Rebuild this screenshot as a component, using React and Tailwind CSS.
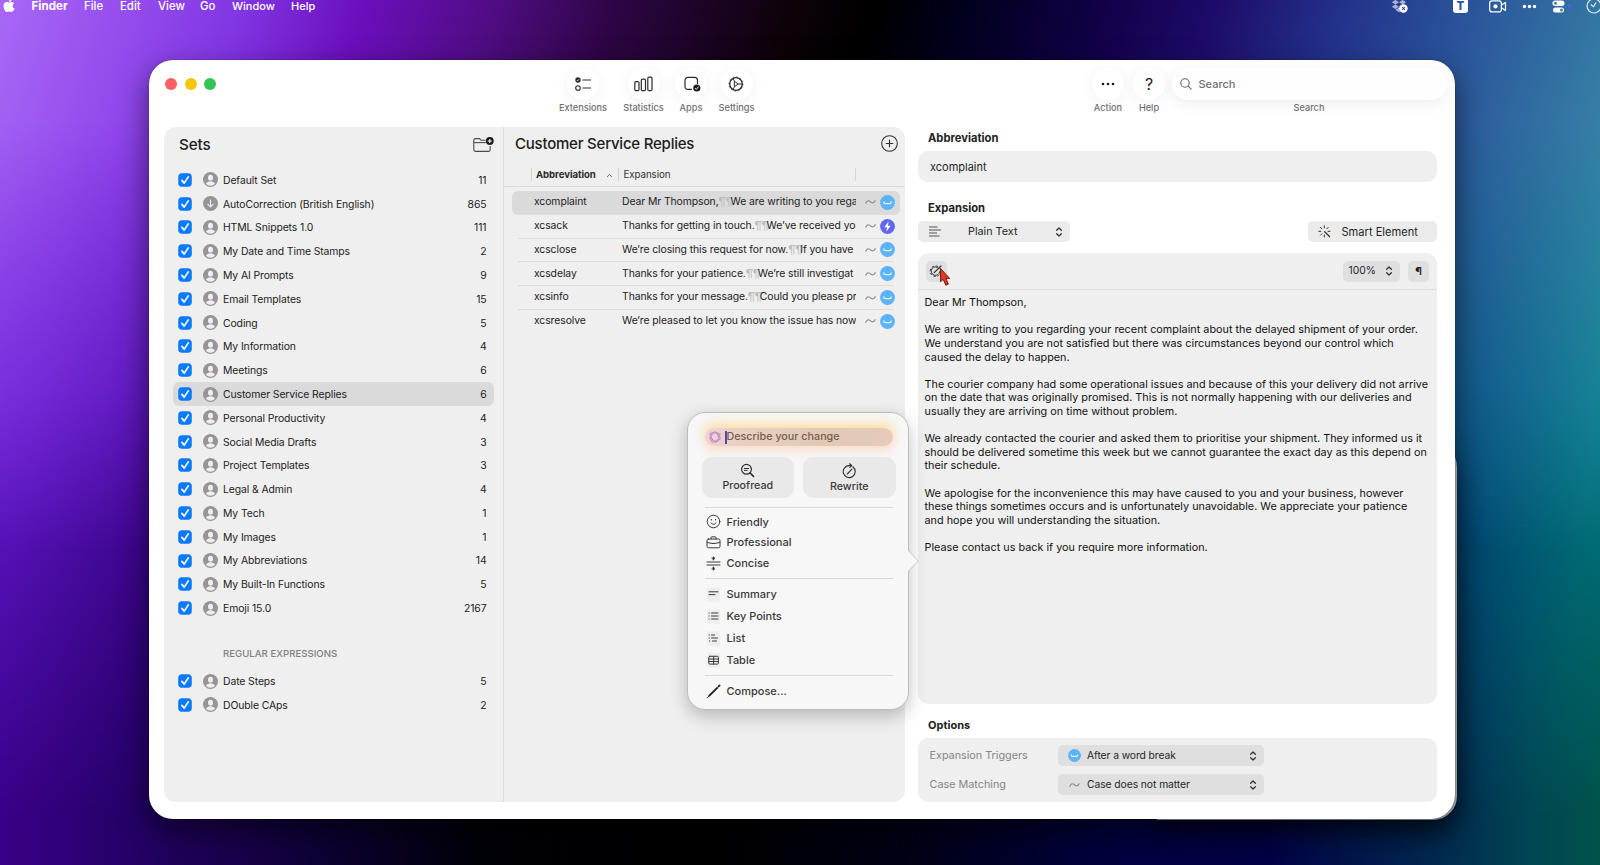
import React from "react";
import { FaApple, FaDropbox } from "react-icons/fa";

const SETS = [
  ["Default Set", "11"],
  ["AutoCorrection (British English)", "865", "down"],
  ["HTML Snippets 1.0", "111"],
  ["My Date and Time Stamps", "2"],
  ["My AI Prompts", "9"],
  ["Email Templates", "15"],
  ["Coding", "5"],
  ["My Information", "4"],
  ["Meetings", "6"],
  ["Customer Service Replies", "6", "selected"],
  ["Personal Productivity", "4"],
  ["Social Media Drafts", "3"],
  ["Project Templates", "3"],
  ["Legal & Admin", "4"],
  ["My Tech", "1"],
  ["My Images", "1"],
  ["My Abbreviations", "14"],
  ["My Built-In Functions", "5"],
  ["Emoji 15.0", "2167"],
];

const SNIPPETS = [
  ["xcomplaint", "Dear Mr Thompson,", "We are writing to you rega"],
  ["xcsack", "Thanks for getting in touch.", "We’ve received yo", "bolt"],
  ["xcsclose", "We’re closing this request for now.", "If you have"],
  ["xcsdelay", "Thanks for your patience.", "We’re still investigat"],
  ["xcsinfo", "Thanks for your message.", "Could you please pr"],
  ["xcsresolve", "We’re pleased to let you know the issue has now", ""],
];

const BODY = [
  ["Dear Mr Thompson,"],
  [
    "We are writing to you regarding your recent complaint about the delayed shipment of your order.",
    "We understand you are not satisfied but there was circumstances beyond our control which",
    "caused the delay to happen.",
  ],
  [
    "The courier company had some operational issues and because of this your delivery did not arrive",
    "on the date that was originally promised. This is not normally happening with our deliveries and",
    "usually they are arriving on time without problem.",
  ],
  [
    "We already contacted the courier and asked them to prioritise your shipment. They informed us it",
    "should be delivered sometime this week but we cannot guarantee the exact day as this depend on",
    "their schedule.",
  ],
  [
    "We apologise for the inconvenience this may have caused to you and your business, however",
    "these things sometimes occurs and is unfortunately unavoidable. We appreciate your patience",
    "and hope you will understanding the situation.",
  ],
  ["Please contact us back if you require more information."],
];

function Check() {
  return (
    <svg className="h-3.5 w-3.5 shrink-0" viewBox="0 0 14 14">
      <rect x="0.2" y="0.2" width="13.6" height="13.6" rx="3.8" fill="#0a7aff" />
      <path d="M3.9 7.4l2.3 2.7 4.1-6.2" fill="none" stroke="#fff" strokeWidth="1.7" strokeLinecap="round" strokeLinejoin="round" />
    </svg>
  );
}

function Avatar({ down }) {
  return (
    <svg className="h-[15px] w-[15px] shrink-0" viewBox="0 0 15 15">
      <circle cx="7.5" cy="7.5" r="7.5" fill="#959597" />
      {down ? (
        <path d="M7.5 3.8v7M4.9 8.3l2.6 2.6 2.6-2.6" fill="none" stroke="#efeff0" strokeWidth="1.1" strokeLinecap="round" strokeLinejoin="round" />
      ) : (
        <g fill="#efeff0">
          <ellipse cx="7.5" cy="5.7" rx="2.5" ry="2.9" />
          <path d="M2.9 11.8c.8-1.6 2.5-2.5 4.6-2.5s3.8.9 4.6 2.5a6.5 6.5 0 0 1-9.2 0z" />
        </g>
      )}
    </svg>
  );
}

function SetRow({ name, count, kind }) {
  return (
    <div className={"flex h-[23.8px] items-center rounded-[6px] pr-[7px] pl-[5px] " + (kind === "selected" ? "bg-[#dadadb]" : "")}>
      <Check />
      <span className="ml-[11px] flex">
        <Avatar down={kind === "down"} />
      </span>
      <span className="mt-[1.3px] ml-[5px] flex-1 whitespace-nowrap">{name}</span>
      <span className="mt-[1.3px] mr-[0.5px]">{count}</span>
    </div>
  );
}

function SmileBadge({ bolt, className }) {
  return (
    <svg className={className} viewBox="0 0 15 15">
      <circle cx="7.5" cy="7.5" r="7.4" fill={bolt ? "#6366ee" : "#5cb3f8"} />
      {bolt ? (
        <path d="M8.5 2.5L4.3 8.3h2.7l-.6 4.3 4.3-5.9H8z" fill="#fff" />
      ) : (
        <path d="M3.9 6.9v.7c0 .6.4 1 1 1h5.2c.6 0 1-.4 1-1v-.7" fill="none" stroke="#e4f3ff" strokeWidth="1.4" strokeLinecap="round" />
      )}
    </svg>
  );
}

function Tilde({ className }) {
  return (
    <svg className={className} viewBox="0 0 11 6">
      <path d="M.9 4.2C1.6 2 3.2.9 5.2 2.6c1.8 1.7 3.7 1.7 4.9-.9" fill="none" stroke="#8a8a8c" strokeWidth="1.2" strokeLinecap="round" />
    </svg>
  );
}

function Chevrons() {
  return (
    <svg className="h-[12px] w-[8px] shrink-0" viewBox="0 0 8 12" fill="none" stroke="#2e2e2e" strokeWidth="1.2" strokeLinecap="round" strokeLinejoin="round">
      <path d="M1.6 4.3L4 2l2.400 2.300M1.600 7.700L4 10l2.400-2.300" />
    </svg>
  );
}

function ToolButton({ label, width, children }) {
  return (
    <div className={"flex flex-col items-center " + width}>
      <div className="flex h-8 w-8 items-center justify-center rounded-full bg-white shadow-[0_3px_16px_rgba(0,0,0,0.06)]">{children}</div>
      <span className="relative mt-[1.5px] text-[9.2px] leading-[13px] font-medium whitespace-nowrap text-[#717173]">{label}</span>
    </div>
  );
}

function ToneIcon({ children }) {
  return (
    <svg className="h-[15px] w-[15px] shrink-0" viewBox="0 0 15 15" fill="none" stroke="#3a3a3a" strokeWidth="1" strokeLinecap="round" strokeLinejoin="round">
      {children}
    </svg>
  );
}

function IconTile() {
  return <rect x="1" y=".5" width="13" height="14" fill="#eeeeef" stroke="none" />;
}

function PopItem({ height, icon, children }) {
  return (
    <div className={"flex items-center gap-[6px] " + height}>
      {icon}
      <span>{children}</span>
    </div>
  );
}

function Popover() {
  return (
    <div className="absolute top-[352px] left-[538px] h-[298px] w-[222px] rounded-[18px] border border-[#bdbdbd] bg-[#f7f7f7] text-[11px] font-medium text-[#3a3a3b] shadow-[0_6px_18px_rgba(0,0,0,0.24)]">
      <svg className="absolute top-[134px] left-[220px] h-[28px] w-[12px]" viewBox="0 0 12 28">
        <path d="M0 1c0 3 1 4 2.5 5.5l6.5 6c1.2 1 1.2 2 0 3l-6.5 6C1 23 0 24 0 27z" fill="#f7f7f7" />
        <path d="M.5 1c.2 3 1 4 2.5 5.5l6 6c1.2 1 1.2 2 0 3l-6 6C1.5 23 .7 24 .5 27" fill="none" stroke="#bdbdbd" strokeWidth="0.9" />
      </svg>
      <div className="flex flex-col pt-[15px] pr-[12.5px] pl-[13.5px]">
        <div className="mx-[3px] flex h-[18px] items-center rounded-full bg-[linear-gradient(90deg,#efd2d3_0%,#e8d0c2_18%,#dfcab6_60%,#e2cab6_85%,#e8cabc_100%)] pl-[3px] shadow-[0_-6px_12px_rgba(255,222,130,0.5),0_6px_12px_rgba(255,210,190,0.4),0_0_6px_2px_rgba(255,210,185,0.5)]">
          <svg className="h-[14px] w-[14px]" viewBox="0 0 14 14" fill="none" strokeWidth="1">
            <path d="M7 1.500l2.300 1.700 2.900.3-.600 2.900.9 2.700-2.700 1.100L8.300 12.500 7 11.800l-2.700.9-1.300-2.500L1.500 8.300l1-2.300L1.900 3.200l2.900 0z" stroke="#d98ae0" strokeLinejoin="round" />
            <ellipse cx="7" cy="7" rx="4.800" ry="3.700" stroke="#7f8af5" transform="rotate(60 7 7)" />
            <ellipse cx="7" cy="7" rx="4.800" ry="3.700" stroke="#f0909c" transform="rotate(140 7 7)" />
          </svg>
          <span className="ml-[3.5px] h-[13px] w-[1.5px] bg-[#4a4ab0]" />
          <span className="mt-[1px] text-[10.75px] text-[#7a5c50]">Describe your change</span>
        </div>
        <div className="mt-[11px] flex gap-[9px]">
          <div className="flex h-[41px] flex-1 flex-col items-center rounded-[10px] bg-[#e9e9ea] pt-[6px]">
            <svg className="h-[15px] w-[15px]" viewBox="0 0 15 15" fill="none" stroke="#2e2e2e" strokeWidth="1.2" strokeLinecap="round">
              <circle cx="6.5" cy="6.3" r="4.9" />
              <path d="M10.2 10l3.3 3.3" strokeWidth="1.7" />
              <path d="M4.4 5.5h4.2M4.4 7.4h2.8" strokeWidth="1" />
            </svg>
            <span className="text-[10.7px] leading-[15px]">Proofread</span>
          </div>
          <div className="flex h-[41px] flex-1 flex-col items-center rounded-[10px] bg-[#e9e9ea] pt-[6px]">
            <svg className="h-[16px] w-[15px]" viewBox="0 0 15 16" fill="none" stroke="#2e2e2e" strokeWidth="1.1" strokeLinecap="round" strokeLinejoin="round">
              <path d="M10.8 3.8a6 6 0 1 1-3.3-1.2h1.8" />
              <path d="M7.6.8l2.2 1.8-2 1.8M5.3 11l4.6-4.8" />
            </svg>
            <span className="text-[10.7px] leading-[15px]">Rewrite</span>
          </div>
        </div>
        <div className="mx-[3px] mt-[8.5px] mb-[4px] border-t border-[#d8d8d9]" />
        <div className="flex flex-col pl-[4px]">
          <PopItem height="h-[20.7px]" icon={<ToneIcon><circle cx="7.5" cy="7.5" r="6.3" /><path d="M5 8.900c1 2 4 2 5 0M5.400 5.400v.7M9.600 5.400v.7" /></ToneIcon>}>Friendly</PopItem>
          <PopItem height="h-[20.7px]" icon={<ToneIcon><rect x="1" y="4" width="13" height="8.8" rx="1.5" /><path d="M5 4V2.700c0-.6.3-.9.900-.9h3.200c.6 0 .9.300.900.900V4M1 7.300c4 1.600 9 1.600 13 0M6.300 8.500h2.400" /></ToneIcon>}>Professional</PopItem>
          <PopItem height="h-[20.7px]" icon={<ToneIcon><path d="M1 6h13M1 9h13M7.500 1v2.500M7.500 14v-2.500" /><path d="M6 1.800h3L7.500 4zM6 13.200h3L7.500 11z" fill="#333" strokeWidth="0.5" /></ToneIcon>}>Concise</PopItem>
        </div>
        <div className="mx-[3px] mt-[4px] mb-[4.5px] border-t border-[#d8d8d9]" />
        <div className="flex flex-col pl-[4px]">
          <PopItem height="h-[22.1px]" icon={<ToneIcon><IconTile /><path d="M3 4.800h9M3 7.600h6" /></ToneIcon>}>Summary</PopItem>
          <PopItem height="h-[22.1px]" icon={<ToneIcon><IconTile /><path d="M5.500 4h6.500M5.500 7h6.500M5.500 10h6.500M3 4h.2M3 7h.2M3 10h.2" /></ToneIcon>}>Key Points</PopItem>
          <PopItem height="h-[22.1px]" icon={<ToneIcon><IconTile /><path d="M5.500 4h3M5.500 7h6M6.500 10h4M3 4h.4M3 7h.4M3.500 10h.4" /></ToneIcon>}>List</PopItem>
          <PopItem height="h-[22.1px]" icon={<ToneIcon><IconTile /><rect x="2.800" y="3.300" width="9.600" height="7.800" rx="1" /><path d="M2.800 6h9.600M2.800 8.500h9.600M7.600 3.300v7.800" /></ToneIcon>}>Table</PopItem>
        </div>
        <div className="mx-[3px] mt-[4px] mb-[4.5px] border-t border-[#d8d8d9]" />
        <div className="pl-[4px]">
          <PopItem height="h-[21px]" icon={<ToneIcon><path d="M2.800 12.200L11.700 3.300" strokeWidth="1.9" stroke="#222" strokeLinecap="butt" /><path d="M12.600 2.400l1-1" strokeWidth="1.9" stroke="#222" /><path d="M1.200 13.800l1.600-1.600" /></ToneIcon>}>Compose...</PopItem>
        </div>
      </div>
    </div>
  );
}

function MenuBar() {
  return (
    <div className="relative flex h-[12px] items-center text-[11.7px] leading-[12px] font-medium text-white">
      <FaApple className="mb-[1px] ml-[2px] h-[15px] w-[14px] shrink-0" />
      <span className="ml-[15.5px] w-[52.5px] text-[11.6px] font-bold">Finder</span>
      <span className="w-[36px] text-[11.4px]">File</span>
      <span className="w-[38px] text-[11.4px]">Edit</span>
      <span className="w-[42px] text-[11.4px]">View</span>
      <span className="w-[32px] text-[11.4px]">Go</span>
      <span className="w-[59px] text-[11px]">Window</span>
      <span className="text-[11px]">Help</span>
      <div className="ml-auto flex items-center">
        <div className="relative mr-[46px] flex">
          <FaDropbox className="h-[14px] w-[16px] text-white/60" />
          <svg className="absolute top-[5px] left-[8px] h-[9px] w-[9px]" viewBox="0 0 9 9">
            <circle cx="4.5" cy="4.5" r="4.2" fill="#fff" />
            <path d="M3.1 3.1l2.8 2.8M5.9 3.1L3.1 5.9" stroke="#2b55a0" strokeWidth="1.1" />
          </svg>
        </div>
        <span className="mb-[1px] flex h-[15px] w-[15px] items-center justify-center rounded-[3px] bg-white text-[11.5px] leading-[12px] font-extrabold text-[#2a5a94]">T</span>
        <svg className="ml-[21px] h-[13px] w-[18px]" viewBox="0 0 18 13" fill="none" stroke="#fff" strokeWidth="1.2">
          <rect x=".7" y=".9" width="11.6" height="11" rx="2.2" />
          <circle cx="6.5" cy="6.4" r="2.1" fill="#fff" stroke="none" />
          <path d="M12.5 5l4-2.6v8l-4-2.6" strokeLinejoin="round" />
        </svg>
        <svg className="ml-[15px] h-[5px] w-[15px]" viewBox="0 0 15 5" fill="#fff">
          <circle cx="2.5" cy="2.5" r="1.7" /><circle cx="7.5" cy="2.5" r="1.7" /><circle cx="12.5" cy="2.5" r="1.7" />
        </svg>
        <svg className="ml-[15px] h-[13px] w-[20px]" viewBox="0 0 20 13">
          <rect x=".5" y=".5" width="12" height="5.4" rx="2.7" fill="#fff" />
          <circle cx="3.5" cy="3.2" r="1.5" fill="#3a7fa8" />
          <rect x="1" y="7.4" width="11" height="5" rx="2.5" fill="#fff" />
          <circle cx="9.5" cy="9.9" r="1.5" fill="#3a7fa8" />
          <circle cx="17.5" cy="6" r="2" fill="#5a5ae0" />
        </svg>
        <svg className="-mr-[2px] ml-[14px] h-[16px] w-[16px]" viewBox="0 0 16 16" fill="none" stroke="#e4f2f6" strokeWidth="1.2">
          <circle cx="8" cy="8" r="7" />
          <path d="M4.800 6.500l2.800 2.200 2.400-4.200" />
        </svg>
      </div>
    </div>
  );
}

function SetsPanel() {
  return (
    <div className="flex h-full w-[340px] shrink-0 flex-col border-r border-[#dcdcdd] pr-[9px] pl-[9px]">
      <div className="flex h-[41px] items-center justify-between pl-[6px]">
        <span className="pb-[5px] text-[15.2px] font-medium tracking-[-0.1px] text-[#1c1c1c]">Sets</span>
        <svg className="mb-[6px] h-[16px] w-[21px]" viewBox="0 0 21 16" fill="none" stroke="#4a4a4a" strokeWidth="1.1">
          <path d="M12.5 3.3H8L6.500 1.600H2.400C1.400 1.600.8 2.200.8 3.200v9.600c0 1 .6 1.600 1.600 1.600h13.200c1 0 1.600-.6 1.600-1.600V9" />
          <path d="M.8 5.600h12" />
          <circle cx="16.800" cy="4" r="3.9" fill="#1c1c1c" stroke="none" />
          <path d="M16.800 2v4M14.800 4h4" stroke="#fff" strokeWidth="1.1" />
        </svg>
      </div>
      <div className="text-[10.4px] tracking-[-0.1px] text-[#222]">
        {SETS.map(([n, c, k]) => (
          <SetRow key={n} name={n} count={c} kind={k} />
        ))}
        <div className="mt-[22px] flex h-[24px] items-center pl-[50px] text-[9.6px] font-medium tracking-[0.02px] text-[#7f7f81]">REGULAR EXPRESSIONS</div>
        <div className="mt-[3px]">
          <SetRow name="Date Steps" count="5" />
          <SetRow name="DOuble CAps" count="2" />
        </div>
      </div>
    </div>
  );
}

function SnippetPanel() {
  return (
    <div className="flex h-full min-w-0 flex-1 flex-col">
      <div className="flex h-[35px] items-center justify-between pr-[7px] pl-[11px]">
        <span className="text-[15px] font-medium tracking-[-0.22px] text-[#1c1c1c]">Customer Service Replies</span>
        <svg className="mb-[2px] h-[17px] w-[17px]" viewBox="0 0 17 17" fill="none" stroke="#333" strokeWidth="1.1" strokeLinecap="round">
          <circle cx="8.5" cy="8.5" r="7.8" />
          <path d="M8.5 5.200v6.600M5.200 8.500h6.600" strokeWidth="1.2" />
        </svg>
      </div>
      <div className="flex h-[25px] items-center border-b border-[#d9d9da] pl-[27px] text-[9.8px] tracking-[-0.1px] text-[#333]">
        <div className="flex h-[13px] w-[87px] items-center justify-between border-l border-[#d4d4d5] pr-[5px] pl-[4px]">
          <span className="mt-[3px] text-[9.6px] font-bold tracking-[-0.05px] text-[#2a2a2a]">Abbreviation</span>
          <svg className="mt-[2px] h-[5px] w-[7px]" viewBox="0 0 7 5"><path d="M1 4l2.500-2.700L6 4" fill="none" stroke="#6a6a6a" /></svg>
        </div>
        <div className="flex h-[13px] w-[237px] items-center border-l border-[#d4d4d5] pl-[4.5px]"><span className="mt-[3px]">Expansion</span></div>
        <div className="h-[13px] border-l border-[#d4d4d5]" />
      </div>
      <div className="mt-[4px] pr-[5px] pl-[8px] text-[10.4px] tracking-[-0.08px] text-[#222]">
        {SNIPPETS.map(([abbr, a, b, kind], i) => (
          <div key={abbr} className={"flex h-[23.8px] flex-col rounded-[6px] px-[6px] " + (i === 0 ? "bg-[#dadadb]" : "")}>
            <div className={"flex flex-1 items-center border-b pl-[16px] " + (i === 0 || i === 5 ? "border-transparent" : "border-[#dcdcdd]")}>
              <span className="mb-[0.7px] w-[88px] shrink-0">{abbr}</span>
              <span className="mb-[0.7px] w-[234px] shrink-0 overflow-hidden whitespace-nowrap">
                {a}
                {b && <span className="inline-block w-[12px] font-['Lato'] text-[10.5px] tracking-[-0.4px] text-[#bdbdbf]">¶¶</span>}
                {b}
              </span>
              <Tilde className="ml-[9px] h-[6px] w-[11px] shrink-0" />
              <SmileBadge bolt={kind === "bolt"} className="ml-[3.5px] h-[15px] w-[15px] shrink-0" />
            </div>
          </div>
        ))}
      </div>
    </div>
  );
}

function DetailPanel() {
  return (
    <div className="ml-[13px] flex h-full w-[519px] flex-col text-[10.8px] text-[#262626]">
      <div className="flex h-[21px] items-center pt-[1px] pl-[10px] text-[11.2px] font-bold text-[#222]">Abbreviation</div>
      <div className="mt-[3px] flex h-[31px] items-center rounded-[10px] bg-[#efefef] pt-[1px] pl-[12px] text-[11px]">xcomplaint</div>
      <div className="mt-[15px] flex h-[21px] items-center pt-[1px] pl-[10px] text-[11.2px] font-bold text-[#222]">Expansion</div>
      <div className="mt-[3px] flex h-[21px] justify-between">
        <div className="flex w-[152px] items-center rounded-[5px] bg-[#ebebec] pr-[7px] pl-[11px]">
          <svg className="h-[11px] w-[12px]" viewBox="0 0 12 11" stroke="#555" strokeWidth="1">
            <path d="M0 1h8.500M0 4h12M0 7h8M0 10h10.500" />
          </svg>
          <span className="mt-[1.3px] ml-[27px] flex-1">Plain Text</span>
          <Chevrons />
        </div>
        <div className="flex w-[129px] items-center rounded-[5px] bg-[#ebebec] pl-[10px]">
          <svg className="h-[13px] w-[13px]" viewBox="0 0 13 13" stroke="#333" strokeWidth="1" strokeLinecap="round">
            <path d="M6.300.8v2M2.500 2.400l1.400 1.400M.8 6.300h2M2.500 10.200l1.400-1.400M6.300 10v2M10.200 2.400L8.800 3.800M10 6.300h2" />
            <path d="M6.700 6.700l4.800 4.800" strokeWidth="1.3" />
          </svg>
          <span className="mt-[1px] ml-[10.500px] text-[11.1px]">Smart Element</span>
        </div>
      </div>
      <div className="mt-[11px] flex h-[451px] flex-col rounded-[11px] bg-[#efefef]">
        <div className="flex h-[37px] items-start border-b border-[#dcdcdd] pt-[7.5px] pr-[8px] pl-[7.5px]">
          <div className="flex h-[21px] w-[21px] items-center justify-center rounded-[5px] bg-[#dfdfe0]">
            <svg className="h-[14px] w-[14px]" viewBox="0 0 14 14" fill="none" stroke="#333" strokeWidth="1" strokeLinecap="round">
              <path d="M9.800 4.300A4.300 4.300 0 1 0 10.800 7.600" />
              <circle cx="6.5" cy="7.2" r="5.300" strokeDasharray="1.500 2.663" />
              <path d="M5.200 8.600L12 2" strokeWidth="1.2" />
            </svg>
          </div>
          <div className="ml-auto flex h-[21px] w-[57px] items-center justify-between rounded-[5px] bg-[#dfdfe0] pr-[7px] pl-[5.5px] text-[10.3px]">
            <span>100%</span>
            <Chevrons />
          </div>
          <div className="ml-[8px] flex h-[21px] w-[21px] items-center justify-center rounded-[5px] bg-[#dfdfe0] text-[11px] font-bold text-[#222]">¶</div>
        </div>
        <div className="flex flex-col gap-[13.59px] pt-[6.3px] pl-[6.5px] text-[10.8px] leading-[13.59px] tracking-[0.022px] whitespace-nowrap text-[#111]">
          {BODY.map((p) => (
            <div key={p[0]}>
              {p.map((l) => (
                <div key={l}>{l}</div>
              ))}
            </div>
          ))}
        </div>
      </div>
      <div className="mt-[10.5px] mb-[2.5px] flex h-[21px] items-center pl-[10px] text-[11px] font-bold text-[#222]">Options</div>
      <div className="flex h-[64px] flex-col justify-center gap-[8px] rounded-[10px] bg-[#efefef] pl-[11.5px] text-[10.8px] text-[#858587]">
        <div className="flex h-[21px] items-center">
          <span className="mt-[1.5px] w-[128.5px]">Expansion Triggers</span>
          <div className="flex h-full w-[206px] items-center rounded-[5px] bg-[#dfdfe0] pr-[7px] pl-[10px] text-[10.3px] tracking-[-0.08px] text-[#262626]">
            <SmileBadge className="h-[13px] w-[13px]" />
            <span className="mt-[0.5px] ml-[6px] flex-1">After a word break</span>
            <Chevrons />
          </div>
        </div>
        <div className="flex h-[21px] items-center">
          <span className="mt-[1.5px] w-[128.5px]">Case Matching</span>
          <div className="flex h-full w-[206px] items-center rounded-[5px] bg-[#dfdfe0] pr-[7px] pl-[11px] text-[10.3px] tracking-[-0.06px] text-[#262626]">
            <Tilde className="h-[6px] w-[11px]" />
            <span className="mt-[0.5px] ml-[7px] flex-1">Case does not matter</span>
            <Chevrons />
          </div>
        </div>
      </div>
    </div>
  );
}

function Toolbar() {
  return (
    <div className="flex h-[67px] shrink-0 items-start">
      <div className="mt-[17.5px] ml-[16px] flex gap-[7.5px]">
        <span className="h-3 w-3 rounded-full bg-[#fe5f62]" />
        <span className="h-3 w-3 rounded-full bg-[#f8c50a]" />
        <span className="h-3 w-3 rounded-full bg-[#35c455]" />
      </div>
      <div className="mt-[7.5px] ml-[342.5px] flex gap-[15.5px]">
        <ToolButton label="Extensions" width="w-[49px]">
          <svg className="h-[16px] w-[16px]" viewBox="0 0 16 16" fill="none" stroke="#2b2b2b" strokeWidth="1.1">
            <circle cx="3" cy="4" r="2.7" fill="#2b2b2b" stroke="none" />
            <path d="M1.900 4l.8.900 1.400-1.800" stroke="#fff" strokeWidth=".7" />
            <circle cx="3" cy="12" r="2.3" />
            <path d="M7.500 4h8.500M7.500 12h8.500" />
          </svg>
        </ToolButton>
        <ToolButton label="Statistics" width="w-[41px]">
          <svg className="h-[16px] w-[19px]" viewBox="0 0 19 16" fill="none" stroke="#2b2b2b" strokeWidth="1.2">
            <rect x=".8" y="5.6" width="4.2" height="9" rx="1.2" />
            <rect x="7.3" y="3.2" width="4.2" height="11.4" rx="1.2" />
            <rect x="13.8" y="1.2" width="4.2" height="13.4" rx="1.2" />
          </svg>
        </ToolButton>
        <ToolButton label="Apps" width="w-[23px]">
          <svg className="ml-[3px] h-[16px] w-[17px] shrink-0" viewBox="0 0 17 16" fill="none" stroke="#2b2b2b" strokeWidth="1.2">
            <path d="M8 13.400H4C2.200 13.400 1 12.200 1 10.400V4.400C1 2.600 2.200 1.400 4 1.400h6.500c1.800 0 3 1.200 3 3V8" />
            <circle cx="12.8" cy="12" r="3.6" fill="#1c1c1c" stroke="none" />
            <path d="M11.100 12.100l1.200 1.300 2.200-2.800" stroke="#fff" strokeWidth=".9" />
          </svg>
        </ToolButton>
        <ToolButton label="Settings" width="w-[37px]">
          <svg className="mr-[1px] h-[16px] w-[16px]" viewBox="0 0 16 16" fill="none" stroke="#2b2b2b" strokeWidth="1.3">
            <circle cx="8" cy="8" r="6.3" />
            <circle cx="8" cy="8" r="7.1" strokeWidth=".8" strokeDasharray="1.200 2.517" />
            <path d="M6.400 5.200v5.600l3.600-2.800zM10 8h4M6.400 5.200L5 2.700M6.400 10.800L5 13.300" strokeWidth="1" strokeLinejoin="round" />
          </svg>
        </ToolButton>
      </div>
      <div className="mt-[7.5px] ml-auto flex">
        <ToolButton label="Action" width="w-[32px]">
          <svg className="h-[4px] w-[14px]" viewBox="0 0 14 4" fill="#1a1a1a">
            <circle cx="2" cy="2" r="1.3" /><circle cx="7" cy="2" r="1.3" /><circle cx="12" cy="2" r="1.3" />
          </svg>
        </ToolButton>
        <div className="ml-[9px]">
          <ToolButton label="Help" width="w-[32px]">
            <span className="text-[16px] text-[#1a1a1a]">?</span>
          </ToolButton>
        </div>
        <div className="mr-[8.5px] ml-[6.5px] flex w-[275px] flex-col items-center">
          <div className="flex h-8 w-full items-center rounded-full bg-[#fefefe] pl-[8.5px] font-medium text-[#707072] shadow-[0_4px_16px_rgba(0,0,0,0.07)]">
            <svg className="h-[12px] w-[12px]" viewBox="0 0 12 12" fill="none" stroke="#666" strokeWidth="1.1" strokeLinecap="round">
              <circle cx="5" cy="5" r="4.2" />
              <path d="M8.200 8.200l3 3" />
            </svg>
            <span className="mt-[1px] ml-[6.5px] text-[11px]">Search</span>
          </div>
          <span className="mt-[1.5px] text-[9.2px] leading-[13px] font-medium text-[#717173]">Search</span>
        </div>
      </div>
    </div>
  );
}

export default function App() {
  return (
    <div className="relative h-[865px] w-[1600px] overflow-hidden bg-[linear-gradient(90deg,#380088_0px,#220062_150px,#10003a_300px,#000008_480px,#000_700px,#000015_900px,#000040_1120px,#000045_1260px,#002a50_1440px,#004552_1530px,#00524a_1600px)] font-['Inter','Liberation_Sans',sans-serif]">
      <div className="absolute inset-0 bg-[linear-gradient(96deg,#6c22dc_0px,#6418cc_80px,#4c0aa6_190px,#000_500px,#000_1100px,#00406e_1430px,#004e80_1510px,#00788a_1630px)] [mask-image:linear-gradient(180deg,#000_45%,transparent_95%)]" />
      <div className="absolute inset-0 bg-[linear-gradient(107deg,#a868f6_0px,#9750ee_110px,#8236e4_230px,#6b0ebc_350px,#4e0c80_480px,#2d0545_590px,#0c0208_760px,#000_840px,#00001c_920px,#120048_1060px,#1e0a68_1160px,#22308a_1280px,#2a529a_1400px,#3478a4_1540px,#3f96b0_1660px)] [mask-image:linear-gradient(180deg,#000_14%,transparent_64%)]" />
      <MenuBar />
      <div className="absolute top-[443px] left-[1157px] h-[377px] w-[300px] rounded-r-[24px] bg-[#c3c8d2] shadow-[0_10px_26px_rgba(0,0,0,0.45)]" />
      <div className="relative mt-[48px] ml-[149px] flex h-[759px] w-[1306px] flex-col rounded-[24px] bg-white shadow-[0_0_1px_rgba(0,0,0,0.8),0_12px_30px_rgba(0,0,0,0.55)]">
        <Toolbar />
        <div className="flex h-[675px]">
          <div className="ml-[15px] flex w-[741px] rounded-[12px] bg-[#efefef]">
            <SetsPanel />
            <SnippetPanel />
          </div>
          <DetailPanel />
        </div>
        <Popover />
        <svg className="absolute top-[207px] left-[790px] h-[21px] w-[13px]" viewBox="0 0 13 21">
          <path d="M1.500 1.500v13.200l2.700-2.400 2.600 6 2.600-1.200-2.500-5.700h3.800z" fill="#e8341c" stroke="#5c1a12" strokeWidth="0.9" />
        </svg>
      </div>
    </div>
  );
}
